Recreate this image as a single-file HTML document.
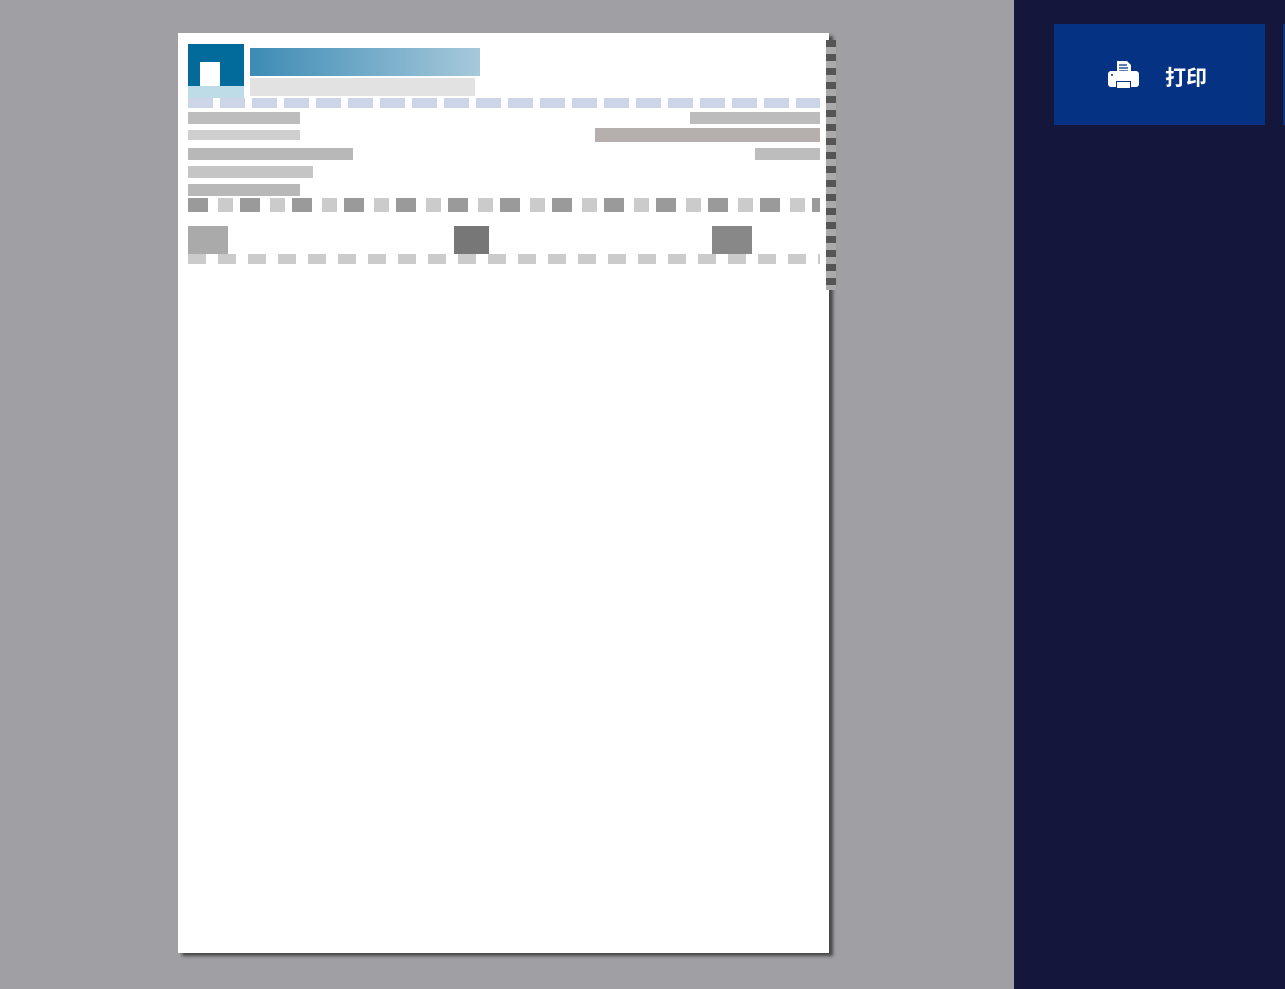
<!DOCTYPE html>
<html><head><meta charset="utf-8"><style>
body{margin:0;width:1285px;height:989px;background:#a09fa4;position:relative;overflow:hidden;font-family:"Liberation Sans","Noto Sans CJK SC",sans-serif}
.pg{position:absolute;left:178px;top:33px;width:651px;height:920px;background:#fff;box-shadow:4px 3px 3px rgba(0,0,0,.55)}
.side{position:absolute;left:1014px;top:0;width:271px;height:989px;background:#14163c}
.btn{position:absolute;left:1054px;top:24px;width:211px;height:101px;background:#053282;color:#fff;font-size:21px;font-weight:bold}
.b{position:absolute}
.edge{position:absolute;left:826px;top:40px;width:10px;height:250px;background:repeating-linear-gradient(#555 0 7px,#aaa 7px 14px)}
</style></head><body>
<div class="pg"></div>
<div class="edge"></div>
<!-- logo -->
<div class="b" style="left:188px;top:44px;width:56px;height:50px;background:#036a9c"></div>
<div class="b" style="left:200px;top:62px;width:20px;height:28px;background:#fff"></div>
<div class="b" style="left:188px;top:86px;width:56px;height:12px;background:#bedbe8"></div>
<div class="b" style="left:250px;top:48px;width:230px;height:28px;background:linear-gradient(90deg,#3d8bb5,#a6c9db)"></div>
<div class="b" style="left:250px;top:78px;width:225px;height:18px;background:#e2e2e2"></div>
<div class="b" style="left:188px;top:98px;width:632px;height:10px;background:repeating-linear-gradient(90deg,#ccd6e8 0 25px,#fff 25px 32px)"></div>
<!-- left labels -->
<div class="b" style="left:188px;top:112px;width:112px;height:12px;background:#bdbdbd"></div>
<div class="b" style="left:188px;top:130px;width:112px;height:10px;background:#cfcfcf"></div>
<div class="b" style="left:188px;top:148px;width:165px;height:12px;background:#b8b8b8"></div>
<div class="b" style="left:188px;top:166px;width:125px;height:12px;background:#c5c5c5"></div>
<div class="b" style="left:188px;top:184px;width:112px;height:12px;background:#b8b8b8"></div>
<!-- right -->
<div class="b" style="left:690px;top:112px;width:130px;height:12px;background:#bcbcbc"></div>
<div class="b" style="left:595px;top:128px;width:225px;height:14px;background:#b5b0ad"></div>
<div class="b" style="left:755px;top:148px;width:65px;height:12px;background:#bdbdbd"></div>
<!-- table -->
<div class="b" style="left:188px;top:198px;width:632px;height:14px;background:repeating-linear-gradient(90deg,#9a9a9a 0 20px,#fff 20px 30px,#cbcbcb 30px 45px,#fff 45px 52px)"></div>
<div class="b" style="left:188px;top:226px;width:40px;height:30px;background:#aaa"></div>
<div class="b" style="left:454px;top:226px;width:35px;height:30px;background:#777"></div>
<div class="b" style="left:712px;top:226px;width:40px;height:30px;background:#888"></div>
<div class="b" style="left:188px;top:254px;width:632px;height:10px;background:repeating-linear-gradient(90deg,#cbcbcb 0 18px,#fff 18px 30px)"></div>
<div class="side"></div>
<div class="b" style="left:1283px;top:24px;width:2px;height:101px;background:#053282"></div>
<div class="btn">
<svg style="position:absolute;left:54px;top:36px" width="32" height="28" viewBox="0 0 32 28"><path d="M9 1h10l4 4v8H9z" fill="#fff"/><path d="M11 5h8M11 8h9M11 11h9" stroke="#053282" stroke-width="1.3"/><rect x="0" y="11" width="31" height="16" rx="3" fill="#fff"/><rect x="8" y="21" width="15" height="7" fill="#053282"/><rect x="9" y="22" width="13" height="6" fill="#fff"/><circle cx="4" cy="15" r="1" fill="#053282"/></svg>
<span style="position:absolute;left:111px;top:38px">打印</span>
</div>
</body></html>
